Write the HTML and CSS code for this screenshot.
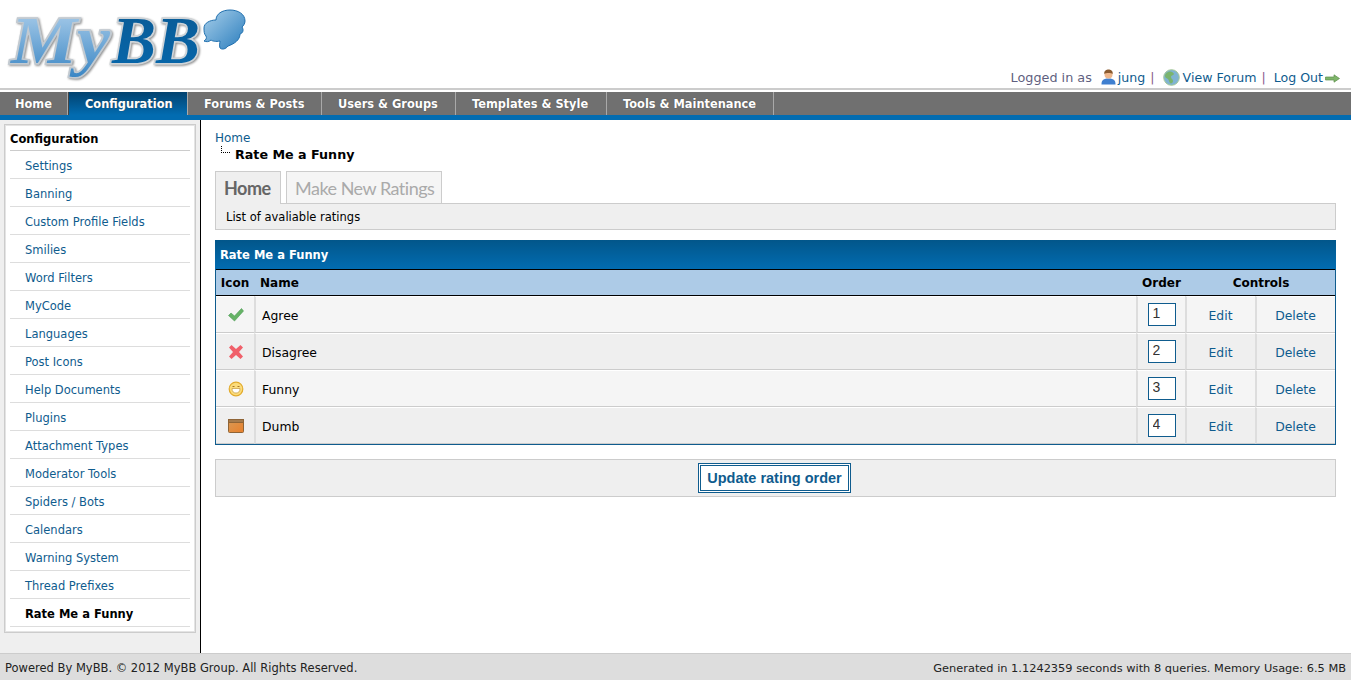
FILE: index.html
```html
<!DOCTYPE html>
<html lang="en">
<head>
<meta charset="utf-8">
<title>Rate Me a Funny</title>
<link rel="stylesheet" href="styles.css">
</head>
<body>
<header class="top">
  <svg class="logo" width="250" height="84" viewBox="0 0 250 84">
    <defs>
      <linearGradient id="lg1" x1="0" y1="0" x2="0" y2="1"><stop offset="0" stop-color="#b5d4ee"/><stop offset="1" stop-color="#3a86c4"/></linearGradient>
      <linearGradient id="lg2" x1="0" y1="0" x2="0" y2="1"><stop offset="0" stop-color="#0b5a94"/><stop offset="1" stop-color="#0668ad"/></linearGradient>
      <linearGradient id="lg3" x1="0" y1="0" x2="1" y2="1"><stop offset="0" stop-color="#a8cfea"/><stop offset="1" stop-color="#2a7dbd"/></linearGradient>
      <linearGradient id="lg4" x1="0" y1="0" x2="1" y2="1"><stop offset="0" stop-color="#d99a56"/><stop offset="1" stop-color="#e8802c"/></linearGradient>
    </defs>
    <text class="logo-my" x="11" y="63" textLength="99" lengthAdjust="spacingAndGlyphs">My</text>
    <text class="logo-bb" x="112" y="63" textLength="88" lengthAdjust="spacingAndGlyphs">BB</text>
    <path d="M204 28C204 23 210 20 216 20 216 14 222 10 230 10 238 10 245 14 245 21 245 24 243 26 242 27 244 30 243 33 240 34 240 40 234 44 228 46 226 49 222 50 220 48 219 45 220 43 220 41 216 42 212 41 211 40 209 42 206 42 204 41 206 40 207 38 206 36 204 34 204 31 204 28Z" fill="url(#lg3)" stroke="#1f6fae" stroke-width="1"/>
  </svg>
  <div class="user">
    <span>Logged in as</span>
    <svg class="ico-user" width="15" height="16" viewBox="0 0 15 16"><path d="M.5 15.500c0-3.500 1-6 7-6s7 2.500 7 6z" fill="#3f7fd0"/><circle cx="7.500" cy="5.500" r="4" fill="#eeb78c"/><path d="M3.200 5C3 1.500 5.500.5 7.500.5s4.500 1 4.300 4.500C10 3.800 5 3.800 3.200 5z" fill="#8a5a2e"/></svg>
    <a href="#">jung</a><span class="sep">|</span>
    <svg class="ico-globe" width="17" height="17" viewBox="0 0 17 17"><circle cx="8.500" cy="8.500" r="7.800" fill="#7fb3d2" stroke="#a3c795"/><path d="M5 3c3-1 5 0 6 2-1 2-3 1-3 3s2 2 2 4-2 3-3 2-1-3-2-4-3-1-3-3 1-3 3-4z" fill="#7ab46c"/></svg>
    <a href="#" class="view">View Forum</a><span class="sep">|</span>
    <a href="#" class="logout">Log Out</a>
    <svg class="ico-arrow" width="15" height="9" viewBox="0 0 15 9"><path d="M.5 3h8.500V.8L14.500 4.500 9 8.200V6H.5z" fill="#7fb56a" stroke="#5c8f4a" stroke-width=".7"/></svg>
  </div>
</header>
<nav class="nav">
  <a href="#" class="nav-item home">Home</a>
  <a href="#" class="nav-item active">Configuration</a>
  <a href="#" class="nav-item">Forums &amp; Posts</a>
  <a href="#" class="nav-item">Users &amp; Groups</a>
  <a href="#" class="nav-item">Templates &amp; Style</a>
  <a href="#" class="nav-item">Tools &amp; Maintenance</a>
</nav>
<div class="page">
  <aside class="side">
    <div class="side-box">
      <div class="side-title">Configuration</div>
      <a href="#" class="side-link">Settings</a>
      <a href="#" class="side-link">Banning</a>
      <a href="#" class="side-link">Custom Profile Fields</a>
      <a href="#" class="side-link">Smilies</a>
      <a href="#" class="side-link">Word Filters</a>
      <a href="#" class="side-link">MyCode</a>
      <a href="#" class="side-link">Languages</a>
      <a href="#" class="side-link">Post Icons</a>
      <a href="#" class="side-link">Help Documents</a>
      <a href="#" class="side-link">Plugins</a>
      <a href="#" class="side-link">Attachment Types</a>
      <a href="#" class="side-link">Moderator Tools</a>
      <a href="#" class="side-link">Spiders / Bots</a>
      <a href="#" class="side-link">Calendars</a>
      <a href="#" class="side-link">Warning System</a>
      <a href="#" class="side-link">Thread Prefixes</a>
      <a href="#" class="side-link current">Rate Me a Funny</a>
    </div>
  </aside>
  <main class="main">
    <div class="crumb"><a href="#">Home</a></div>
    <div class="crumb-sub"><span class="crumb-line"></span>Rate Me a Funny</div>
    <div class="tabs">
      <a href="#" class="tab on">Home</a>
      <a href="#" class="tab">Make New Ratings</a>
    </div>
    <div class="desc">List of avaliable ratings</div>
    <div class="panel">
      <div class="panel-title">Rate Me a Funny</div>
      <table class="grid">
        <colgroup><col class="c-icon"><col><col class="c-order"><col class="c-edit"><col class="c-del"></colgroup>
        <thead>
          <tr><th>Icon</th><th class="left">Name</th><th class="nudge">Order</th><th class="nudge" colspan="2">Controls</th></tr>
        </thead>
        <tbody>
          <tr>
            <td class="mid ic"><svg width="16" height="16" viewBox="0 0 16 16"><path d="M.5 8.500L3 6l3.500 3L13.500 1.500 15.500 4l-9 10z" fill="#66b366" stroke="#4c9a56" stroke-width=".6"/></svg></td>
            <td>Agree</td>
            <td class="mid"><input class="ord" value="1"></td>
            <td class="mid lnk"><a href="#">Edit</a></td>
            <td class="mid lnk"><a href="#">Delete</a></td>
          </tr>
          <tr class="alt">
            <td class="mid ic"><svg width="16" height="16" viewBox="0 0 16 16"><path d="M3.500 1L8 5l4.500-4L15 3.500 11 8l4 4.500-2.500 2.500L8 11l-4.500 4L1 12.500 5 8 1 3.500z" fill="#f0606a"/></svg></td>
            <td>Disagree</td>
            <td class="mid"><input class="ord" value="2"></td>
            <td class="mid lnk"><a href="#">Edit</a></td>
            <td class="mid lnk"><a href="#">Delete</a></td>
          </tr>
          <tr>
            <td class="mid ic"><svg width="16" height="16" viewBox="0 0 16 16"><circle cx="8" cy="8" r="6.800" fill="#fbdc7c" stroke="#e2ab2c" stroke-width="1.200"/><path d="M4 7.500h8c0 3-1.500 4.500-4 4.500s-4-1.500-4-4.500z" fill="#fff" stroke="#b98a2a" stroke-width=".6"/><path d="M4.500 5.500h2M9.500 5.500h2" stroke="#a5762a" stroke-width="1"/></svg></td>
            <td>Funny</td>
            <td class="mid"><input class="ord" value="3"></td>
            <td class="mid lnk"><a href="#">Edit</a></td>
            <td class="mid lnk"><a href="#">Delete</a></td>
          </tr>
          <tr class="alt">
            <td class="mid ic"><svg width="16" height="16" viewBox="0 0 16 16"><rect x=".5" y="1.500" width="15" height="13" rx="1" fill="url(#lg4)" stroke="#8f6436"/><rect x=".5" y="1.500" width="15" height="3" fill="#a57a4c" stroke="#8f6436"/></svg></td>
            <td>Dumb</td>
            <td class="mid"><input class="ord" value="4"></td>
            <td class="mid lnk"><a href="#">Edit</a></td>
            <td class="mid lnk"><a href="#">Delete</a></td>
          </tr>
        </tbody>
      </table>
    </div>
    <div class="actions"><button class="submit" type="button">Update rating order</button></div>
  </main>
</div>
<footer class="foot">
  <span>Powered By MyBB. © 2012 MyBB Group. All Rights Reserved.</span>
  <span class="gen">Generated in 1.1242359 seconds with 8 queries. Memory Usage: 6.5 MB</span>
</footer>
</body>
</html>
```
FILE: styles.css
```css
* { box-sizing: border-box; }
html, body { height: 100%; }
body {
  margin: 0;
  height: 680px;
  overflow: hidden;
  display: flex;
  flex-direction: column;
  background: #fff;
  font-family: "DejaVu Sans", Verdana, sans-serif;
  font-size: 11.5px;
  color: #000;
}
a { color: #0f5c8e; text-decoration: none; }

.top {
  height: 92px;
  flex: none;
  display: flex;
  justify-content: space-between;
  align-items: flex-end;
  border-bottom: 2px solid #fff;
  box-shadow: inset 0 -2px 0 #ccc;
  padding-bottom: 3px;
}
.logo { align-self: flex-start; overflow: visible; }
.logo text {
  font-family: "Liberation Serif", serif;
  font-weight: bold;
  font-style: italic;
  font-size: 68px;
  paint-order: stroke;
  filter: drop-shadow(1px 1px 1px #8a8a8a);
}
.logo-my { fill: url(#lg1); stroke: #c2cad1; stroke-width: 3.5px; }
.logo-bb { fill: url(#lg2); stroke: #cfd4d8; stroke-width: 3.5px; }

.user {
  display: flex;
  align-items: center;
  height: 20px;
  padding-right: 11px;
  font-size: 12.6px;
  color: #5f5f7f;
}
.user a { color: #0f5c8e; }
.user > span:first-child { font-size: 12.8px; }
.ico-user { margin: 0 2px 0 9px; }
.sep { margin-left: 5px; color: #8a5a8a; }
.ico-globe { margin: 0 3px 0 8px; }
.logout { margin-left: 8px; }
.ico-arrow { margin: 3px 0 0 2px; }

.nav {
  flex: none;
  height: 28px;
  display: flex;
  background: #707070;
  border-bottom: 5px solid #026cb1;
}
.nav-item {
  display: block;
  height: 23px;
  padding: 0 16px;
  line-height: 25px;
  font-size: 11.4px;
  font-weight: bold;
  color: #fff;
  border-right: 1px solid #a9a9a9;
  text-shadow: 0 0 1px #444;
  white-space: nowrap;
}
.nav-item.home { width: 68px; padding: 0 15px; }
.nav-item.active {
  width: 120px;
  background: linear-gradient(#02426f, #026cb1);
  border-left: 1px solid #444;
}
.nav-item:nth-child(3) { width: 134px; }
.nav-item:nth-child(4) { width: 134px; }
.nav-item:nth-child(5) { width: 151px; }
.nav-item:nth-child(6) { width: 167px; }

.page { flex: 1; min-height: 0; display: flex; }
.side {
  flex: none;
  width: 201px;
  padding: 4px 4px 0;
  background: #efefef;
  border-right: 1px solid #000;
}
.side-box {
  width: 192px;
  height: 509px;
  padding: 0 4px;
  background: #fff;
  border: 1px solid #ccc;
  box-shadow: inset 0 0 0 1px #e4e4e4;
}
.side-title {
  height: 26px;
  margin: 0 1px;
  padding: 8px 0 0;
  line-height: 13px;
  font-weight: bold;
  border-bottom: 1px solid #ccc;
}
.side-link {
  display: block;
  height: 28px;
  margin: 0 1px;
  padding-left: 15px;
  line-height: 30px;
  color: #0f5c8e;
  border-bottom: 1px solid #ddd;
}
.side-link.current { color: #000; font-weight: bold; }

.main { flex: 1; min-width: 0; padding: 11px 15px 0 14px; }
.crumb { height: 15px; line-height: 15px; font-size: 12px; }
.crumb-sub {
  position: relative;
  height: 18px;
  padding-left: 20px;
  line-height: 18px;
  font-size: 12.7px;
  font-weight: bold;
}
.crumb-line {
  position: absolute;
  left: 6px;
  top: 0;
  width: 9px;
  height: 7px;
  border-left: 1px dotted #000;
  border-bottom: 1px dotted #000;
}
.tabs { display: flex; gap: 5px; margin-top: 7px; }
.tab {
  display: block;
  height: 32px;
  padding: 0 8px;
  line-height: 32px;
  font-family: Lato, sans-serif;
  font-size: 18px;
  letter-spacing: -.5px;
  white-space: nowrap;
  color: #aaa;
  background: #f5f5f5;
  border: 1px solid #ccc;
  border-bottom: 0;
}
.tab.on {
  position: relative;
  height: 33px;
  margin-bottom: -1px;
  color: #666;
  font-weight: 700;
  background: #efefef;
  z-index: 1;
  width: 66px;
}
.tab:nth-child(2) { width: 156px; }
.desc {
  height: 27px;
  padding-left: 10px;
  line-height: 27px;
  background: #efefef;
  border: 1px solid #ccc;
}
.panel { margin-top: 10px; border: 1px solid #0f5c8e; border-top: 0; }
.panel-title {
  height: 29px;
  padding-left: 5px;
  line-height: 31px;
  font-weight: bold;
  color: #fff;
  background: linear-gradient(#02568a, #026cb1);
  margin: 0 -1px;
}
.grid { width: 100%; table-layout: fixed; border-collapse: separate; border-spacing: 0; font-size: 12.4px; }
.c-icon { width: 38px; }
.c-order { width: 49px; }
.c-edit { width: 70px; }
.c-del { width: 80px; }
.grid th {
  height: 27px;
  padding: 0;
  font-weight: bold;
  font-size: 12px;
  text-align: center;
  background: #adcbe7;
  border-top: 1px solid #000;
  border-bottom: 1px solid #000;
}
.grid th.left { text-align: left; padding-left: 6px; }
.grid th.nudge { padding-left: 2px; }
.grid td {
  height: 37px;
  padding: 2px 0 0 6px;
  background: #f5f5f5;
  border-top: 1px solid #fff;
  border-bottom: 1px solid #ccc;
  border-left: 2px solid #ddd;
}
.grid td:first-child { border-left: 0; }
.grid .alt td { background: #efefef; }
.grid td.mid { padding: 0; text-align: center; }
.grid td.ic { padding-left: 2px; }
.grid td.lnk { padding: 2px 1px 0 0; }
.grid svg { display: inline-block; vertical-align: middle; }
.ord {
  display: inline-block;
  width: 28px;
  height: 23px;
  margin-bottom: 1px;
  padding: 0 0 2px 4px;
  vertical-align: middle;
  font-family: "Liberation Sans", Arial, sans-serif;
  font-size: 14px;
  color: #333;
  background: #fff;
  border: 1px solid #0f5c8e;
  border-radius: 0;
}
.actions {
  display: flex;
  justify-content: center;
  align-items: center;
  height: 38px;
  margin-top: 14px;
  padding: 0 2px 1px 0;
  background: #efefef;
  border: 1px solid #ccc;
}
.submit {
  width: 153px;
  height: 30px;
  padding: 0;
  font-family: "Liberation Sans", Arial, sans-serif;
  font-size: 14.5px;
  font-weight: bold;
  color: #0f5c8e;
  background: #fff;
  border: 3px double #0f5c8e;
  border-radius: 0;
}

.foot {
  flex: none;
  height: 27px;
  display: flex;
  justify-content: space-between;
  align-items: center;
  padding: 1px 5px 0;
  background: #ddd;
  border-top: 1px solid #ccc;
  color: #222;
}
.gen { font-size: 11.36px; }
```
